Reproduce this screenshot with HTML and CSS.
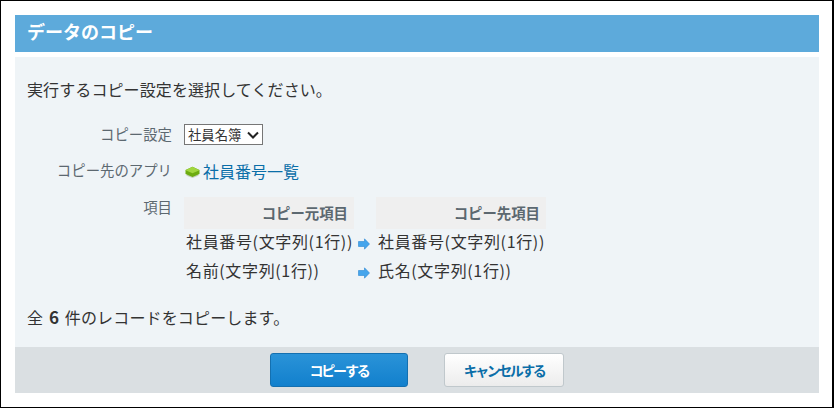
FILE: index.html
```html
<!DOCTYPE html>
<html lang="ja">
<head>
    <meta charset="UTF-8">
    <title>データのコピー</title>
    <link rel="stylesheet" href="styles.css">
</head>
<body>
    <div class="frame">
        <h1 class="title">データのコピー</h1>
        <div class="panel">
            <p class="lead">実行するコピー設定を選択してください。</p>
            <div class="form-row setting-row">
                <div class="label">コピー設定</div>
                <select class="select"><option>社員名簿</option></select>
            </div>
            <div class="form-row app-row">
                <div class="label">コピー先のアプリ</div>
                <a class="app-link" href="#">
                    <svg class="cube" width="15" height="12" viewBox="0 0 15 12">
                        <path d="M1 9.500 7.500 12 14 9.500 7.500 7Z" fill="#c4cfbc"/>
                        <path d="M0.500 4 7.500 0.800 14.500 4V8L7.500 11 0.500 8Z" fill="#6cab10"/>
                        <path d="M0.500 4.200 7.500 0.800 14.500 4.200 7.500 7.200Z" fill="#a0d63e"/>
                    </svg>社員番号一覧</a>
            </div>
            <div class="form-row">
                <div class="label">項目</div>
                <div class="mapping">
                    <div class="map-head">コピー元項目</div>
                    <div></div>
                    <div class="map-head">コピー先項目</div>
                    <div class="map-cell">社員番号(文字列(1行))</div>
                    <svg class="arrow" width="12" height="12" viewBox="0 0 12 12"><path d="M0.500 3.500H6.500V0.800L11.500 6 6.500 11.200V8.500H0.500Z" fill="#45a5ec" stroke="#2a86d4" stroke-width="0.6"/></svg>
                    <div class="map-cell">社員番号(文字列(1行))</div>
                    <div class="map-cell">名前(文字列(1行))</div>
                    <svg class="arrow" width="12" height="12" viewBox="0 0 12 12"><path d="M0.500 3.500H6.500V0.800L11.500 6 6.500 11.200V8.500H0.500Z" fill="#45a5ec" stroke="#2a86d4" stroke-width="0.6"/></svg>
                    <div class="map-cell">氏名(文字列(1行))</div>
                </div>
            </div>
            <p class="count">全 <b>6</b> 件のレコードをコピーします。</p>
        </div>
        <div class="footer">
            <button class="btn btn-primary">コピーする</button>
            <button class="btn btn-cancel">キャンセルする</button>
        </div>
    </div>
</body>
</html>
```

FILE: styles.css
```css
* {
    margin: 0;
    padding: 0;
    box-sizing: border-box;
}

html, body {
    width: 834px;
    height: 408px;
    overflow: hidden;
}

body {
    background: #fff;
    font-family: "Noto Sans CJK JP", "Noto Sans", sans-serif;
    color: #333;
}

.frame {
    width: 834px;
    height: 408px;
    border: solid #000;
    border-width: 1px 2px 1px 1px;
    padding: 14px 13px 0 14px;
}

.title {
    height: 37px;
    margin-bottom: 5px;
    padding-left: 12px;
    background: #5daadb;
    color: #fff;
    font-size: 18px;
    font-weight: 700;
    line-height: 33px;
}

.panel {
    height: 290px;
    padding: 20px 12px 0;
    background: #eff4f7;
}

.lead {
    font-size: 16px;
    line-height: 24px;
    letter-spacing: 0.1px;
    margin-bottom: 23px;
}

.form-row {
    display: flex;
    align-items: flex-start;
}

.setting-row {
    height: 22px;
    margin-bottom: 14px;
}

.app-row {
    height: 22px;
    margin-bottom: 15px;
}

.label {
    width: 145px;
    margin-right: 12px;
    text-align: right;
    color: #5c6870;
    font-size: 14.400px;
    line-height: 20px;
}

.select {
    appearance: none;
    width: 79px;
    height: 21px;
    padding-left: 3px;
    font-family: inherit;
    font-size: 13.333px;
    color: #333;
    background: #fff url("data:image/svg+xml,%3Csvg xmlns='http://www.w3.org/2000/svg' width='12' height='8'%3E%3Cpath d='M1 1.500 6 6.500 11 1.500' fill='none' stroke='%23222' stroke-width='2'/%3E%3C/svg%3E") no-repeat right 3px center;
    border: 1px solid #767676;
}

.app-link {
    display: flex;
    align-items: center;
    color: #0a6ea8;
    font-size: 16px;
    line-height: 22px;
    text-decoration: none;
}

.cube {
    margin: 2px 3px 0 1px;
}

.mapping {
    display: grid;
    grid-template-columns: 170px 22px 170px;
    grid-template-rows: 32px 29px 29px;
}

.map-head {
    padding: 6px 6px 0 0;
    background: #efefef;
    color: #5c6870;
    font-size: 14.400px;
    font-weight: 700;
    line-height: 20px;
    text-align: right;
}

.map-cell {
    padding-left: 2px;
    font-size: 16px;
    letter-spacing: 0.65px;
    line-height: 24px;
    white-space: nowrap;
}

.arrow {
    margin: 9px 0 0 4px;
}

.count {
    margin-top: 18px;
    font-size: 16px;
    line-height: 24px;
    letter-spacing: 0.15px;
    word-spacing: 2px;
}

.count b {
    font-size: 17px;
}

.footer {
    display: flex;
    justify-content: center;
    gap: 36px;
    height: 46px;
    padding-top: 6px;
    background: #dadfe2;
}

.btn {
    height: 34px;
    border-radius: 3px;
    font-family: inherit;
    font-size: 14px;
    font-weight: 700;
}

.btn-primary {
    width: 138px;
    color: #fff;
    letter-spacing: -2.200px;
    background: linear-gradient(#2a93d8, #1280cd);
    border: 1px solid #1470b0;
}

.btn-cancel {
    width: 120px;
    color: #0a6ea8;
    letter-spacing: -2.500px;
    background: linear-gradient(#fff, #ececec);
    border: 1px solid #c0c8cc;
}
```
